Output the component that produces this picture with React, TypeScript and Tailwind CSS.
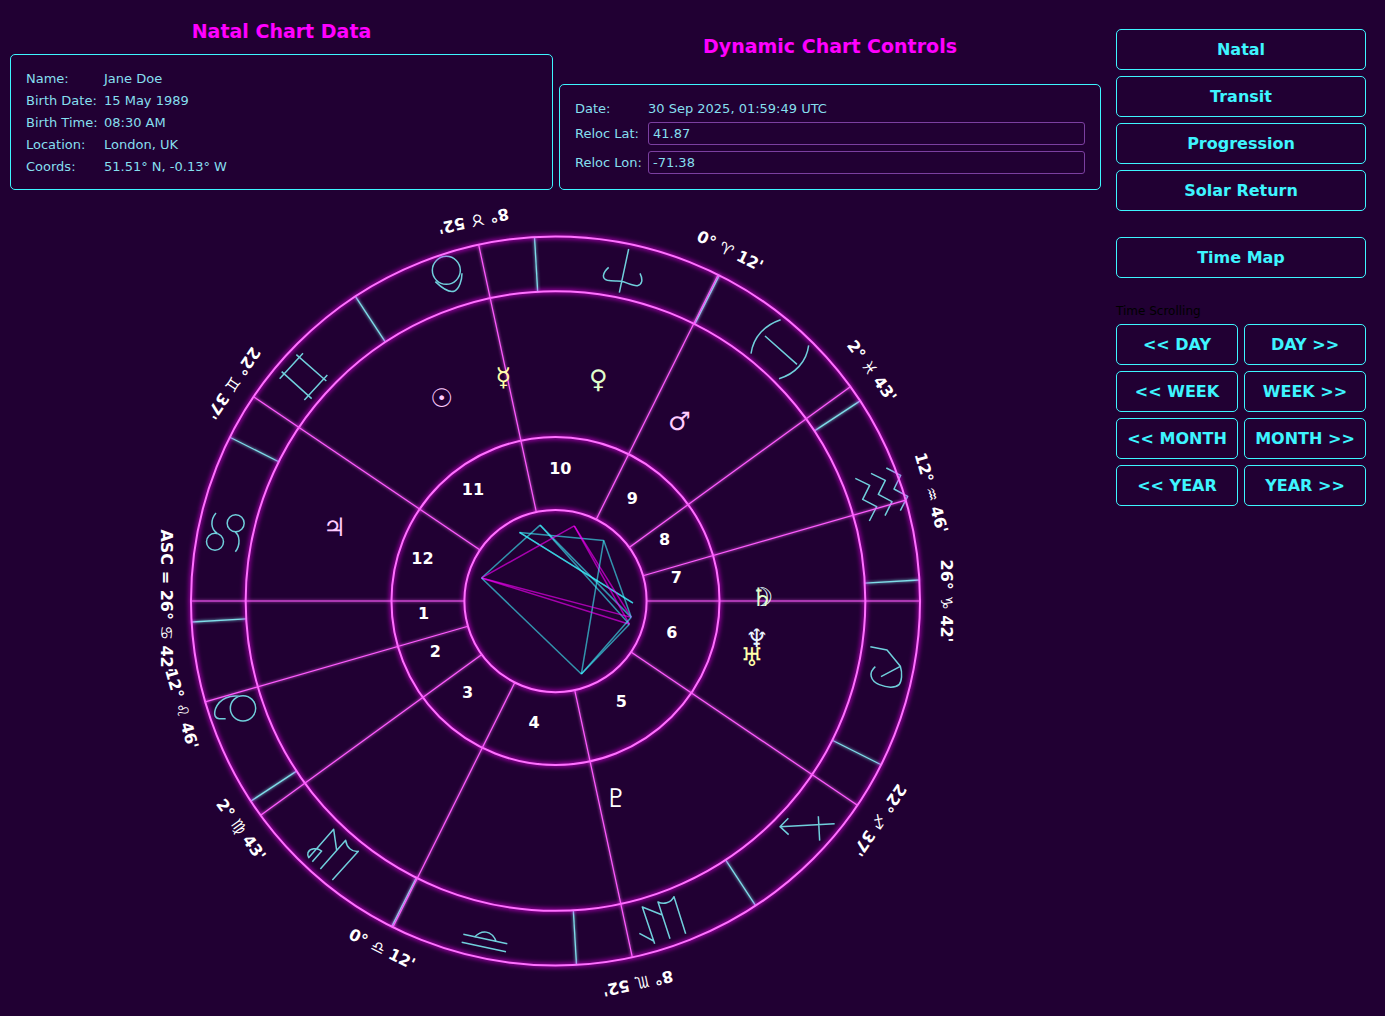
import React from "react";

const CX = 555.5;
const CY = 601;
const R = 364.5;

const point = (d: number, r: number) => {
  const a = (d * Math.PI) / 180;
  return { x: CX - r * Math.cos(a), y: CY + r * Math.sin(a) };
};

// Angles are degrees counterclockwise from the ascendant.
const cusps = [
  { d: 0, label: "ASC = 26° ♋︎ 42'" },
  { d: 16.07, label: "12° ♌︎ 46'" },
  { d: 36.02, label: "2° ♍︎ 43'" },
  { d: 63.5, label: "0° ♎︎ 12'" },
  { d: 102.17, label: "8° ♏︎ 52'" },
  { d: 145.92, label: "22° ♐︎ 37'" },
  { d: 180, label: "26° ♑︎ 42'" },
  { d: 196.07, label: "12° ♒︎ 46'" },
  { d: 216.02, label: "2° ♓︎ 43'" },
  { d: 243.5, label: "0° ♈︎ 12'" },
  { d: 282.17, label: "8° ♉︎ 52'" },
  { d: 325.92, label: "22° ♊︎ 37'" },
];

const planets: Record<string, { d: number; glyph: string; color: string }> = {
  sun: { d: -62.3, glyph: "☉", color: "#ffccff" },
  moon: { d: 178.5, glyph: "☽", color: "#e0ffff" },
  mercury: { d: -78.5, glyph: "☿", color: "#ffffaa" },
  venus: { d: -104, glyph: "♀", color: "#e0ffcc" },
  mars: { d: -128.5, glyph: "♂", color: "#ffccff" },
  jupiter: { d: -17.3, glyph: "♃", color: "#ffccff" },
  saturn: { d: 178.6, glyph: "♄", color: "#e0ffcc" },
  uranus: { d: 162.6, glyph: "♅", color: "#ffffaa" },
  neptune: { d: 167.8, glyph: "♆", color: "#e8f4ff" },
  pluto: { d: 109.5, glyph: "♇", color: "#ffffff" },
};

const aspects: [string, string, string][] = [
  ["sun", "moon", "#3ef5ff"],
  ["sun", "saturn", "#3ef5ff"],
  ["sun", "mars", "#3ef5ff"],
  ["mercury", "jupiter", "#3ef5ff"],
  ["mercury", "uranus", "#3ef5ff"],
  ["mercury", "neptune", "#3ef5ff"],
  ["venus", "jupiter", "#ff00ff"],
  ["venus", "uranus", "#ff00ff"],
  ["venus", "neptune", "#ff00ff"],
  ["mars", "neptune", "#3ef5ff"],
  ["mars", "pluto", "#3ef5ff"],
  ["jupiter", "uranus", "#ff00ff"],
  ["jupiter", "neptune", "#ff00ff"],
  ["jupiter", "pluto", "#3ef5ff"],
  ["uranus", "pluto", "#3ef5ff"],
  ["neptune", "pluto", "#3ef5ff"],
];

// Zodiac drawings, each in a local space three times finer than the chart's.
const signs = [
  { at: [430, 200], d: "M596 147 L568 278 M536 202 C518 218 514 236 532 241 C548 245 562 242 574 244 C586 246 608 258 622 257 C636 254 640 240 630 220" },
  { at: [180, 200], d: "M757 211 a42 42 0 1 0 84 0 a42 42 0 1 0 -84 0 M766 245 C790 268 812 278 824 273 C838 266 846 240 846 220" },
  { at: [180, 200], d: "M369 460 L299 536 M442 525 L373 600 M349 464 L439 543 M305 515 L395 596" },
  { at: [140, 480], d: "M261.500 130 a25.500 25.500 0 1 0 51 0 a25.500 25.500 0 1 0 -51 0 M199.500 185 a25.500 25.500 0 1 0 51 0 a25.500 25.500 0 1 0 -51 0 M228 99 C210 120 212 148 232 160 M284 155 C300 165 302 195 286 215" },
  { at: [140, 480], d: "M271 685 a38 38 0 1 0 76 0 a38 38 0 1 0 -76 0 M300 649 C270 644 240 655 227 685 C220 705 226 717 240 716 L257 716" },
  { at: [190, 760], d: "M367 305 L395 273 C380 262 360 265 354 278 C352 285 354 290 356 293 L431 208 L440 271 M391 327 L467 241 C470 262 485 276 505 274 L427 360" },
  { at: [430, 760], d: "M100 523 L232 551 M95 547 L228 575 M133 532 C155 508 185 510 199 545" },
  { at: [430, 760], d: "M628 520 L671 543 M674 551 L637 441 L697 465 M720 536 L684 426 C700 434 722 430 732 410 L767 521" },
  { at: [720, 540], d: "M344 851 L180 860 M205 835 L180 860 L206 884 M295 829 L299 902" },
  { at: [720, 540], d: "M451 320 L501 330 L541 379 L483 410 M541 379 C548 400 545 425 537 434 C525 445 500 443 478 434 C450 422 445 398 466 380" },
  { at: [690, 220], d: "M496 775 L539 796 L518 838 L560 860 L538 903 M543 760 L586 781 L565 823 L606 845 L585 887 M589 744 L632 766 L612 807 L653 829 L631 872" },
  { at: [690, 220], d: "M272 299 C225 315 190 350 183 401 M356 376 C350 425 315 462 267 476 M225 348 L321 433" },
];

const rings = [1, 0.85, 0.45, 0.25];

function Wheel() {
  return (
    <svg viewBox="0 190 1100 826" className="block h-[826px] w-[1100px]">
      <defs>
        <filter id="halo" filterUnits="userSpaceOnUse" x="0" y="190" width="1100" height="826">
          <feGaussianBlur stdDeviation="2.5" />
        </filter>
        <filter id="soft" filterUnits="userSpaceOnUse" x="0" y="190" width="1100" height="826">
          <feGaussianBlur stdDeviation="1.5" result="b" />
          <feMerge>
            <feMergeNode in="b" />
            <feMergeNode in="SourceGraphic" />
          </feMerge>
        </filter>
      </defs>
      <g stroke="#7fdde9" strokeWidth="1.300" filter="url(#soft)">
        {Array.from({ length: 12 }, (_, i) => {
          const a = point(3.3 + i * 30, R);
          const b = point(3.3 + i * 30, R * 0.85);
          return <line key={i} x1={a.x} y1={a.y} x2={b.x} y2={b.y} />;
        })}
      </g>
      <g fill="none" stroke="#70cfdc" strokeWidth="4.500" strokeLinejoin="round">
        {signs.map((s, i) => (
          <path key={i} transform={`translate(${s.at[0]} ${s.at[1]}) scale(0.33333)`} d={s.d} />
        ))}
      </g>
      <g fill="none" stroke="#ff00ff" strokeWidth="2.500" filter="url(#halo)">
        {rings.map((k) => (
          <circle key={k} cx={CX} cy={CY} r={R * k} />
        ))}
      </g>
      <g fill="none" stroke="#ff70ff" strokeWidth="2">
        {rings.map((k) => (
          <circle key={k} cx={CX} cy={CY} r={R * k} />
        ))}
      </g>
      <g stroke="#ff5cff" strokeWidth="1.200" filter="url(#soft)">
        {cusps.map((c) => {
          const a = point(c.d, R);
          const b = point(c.d, R * 0.25);
          return <line key={c.d} x1={a.x} y1={a.y} x2={b.x} y2={b.y} />;
        })}
      </g>
      <g strokeWidth="1.500" strokeOpacity="0.6">
        {aspects.map(([p, q, color]) => {
          const a = point(planets[p].d, R * 0.2125);
          const b = point(planets[q].d, R * 0.2125);
          return <line key={p + q} x1={a.x} y1={a.y} x2={b.x} y2={b.y} stroke={color} />;
        })}
      </g>
      <g fill="#ffffff" fontSize="16" fontWeight="700" textAnchor="middle">
        {cusps.map((c) => {
          const p = point(c.d, R + 25.5);
          const rot = (((90 - c.d) % 180) + 180) % 180;
          return (
            <text key={c.d} transform={`translate(${p.x} ${p.y}) rotate(${rot})`} y="4.400">
              {c.label}
            </text>
          );
        })}
      </g>
      <g fill="#ffffff" fontSize="16" fontWeight="700" textAnchor="end">
        {cusps.map((c, i) => {
          const next = i === 11 ? 360 : cusps[i + 1].d;
          const p = point((c.d + next) / 2, R * 0.35);
          return (
            <text key={i} x={p.x} y={p.y}>
              {i + 1}
            </text>
          );
        })}
      </g>
      <g fontSize="25.500" textAnchor="end">
        {Object.entries(planets).map(([name, b]) => {
          const p = point(b.d, R * 0.6);
          return (
            <text key={name} x={p.x - 0.8} y={p.y - 0.3} fill={b.color}>
              {b.glyph}
            </text>
          );
        })}
      </g>
    </svg>
  );
}

function ChartButton({ children }: { children: React.ReactNode }) {
  return (
    <button className="flex h-[41px] w-full items-center justify-center whitespace-nowrap rounded-[5px] border border-[#3ef5ff] text-base font-bold text-[#3ef5ff]">
      {children}
    </button>
  );
}

const natal = [
  ["Name:", "Jane Doe"],
  ["Birth Date:", "15 May 1989"],
  ["Birth Time:", "08:30 AM"],
  ["Location:", "London, UK"],
  ["Coords:", "51.51° N, -0.13° W"],
];

const relocation = [
  ["Reloc Lat:", "41.87"],
  ["Reloc Lon:", "-71.38"],
];

export default function App() {
  return (
    <div className="flex h-[1016px] w-[1385px] overflow-hidden bg-[#210033] font-['DejaVu_Sans',sans-serif]">
      <div className="w-[1101px] shrink-0">
        <div className="flex h-[190px] gap-[6px] pl-[10px] text-[13px] text-[#86dfee]">
          <section className="flex w-[543px] flex-col">
            <h3 className="flex h-[54px] items-center justify-center pt-[9px] text-[19px] font-bold text-[#ff00ff]">Natal Chart Data</h3>
            <div className="h-[136px] rounded-[5px] border border-[#3ef5ff] px-[15px] pt-[13px]">
              {natal.map(([k, v]) => (
                <div key={k} className="flex h-[22px] items-center">
                  <span className="w-[78px]">{k}</span>
                  <span>{v}</span>
                </div>
              ))}
            </div>
          </section>
          <section className="flex w-[542px] flex-col">
            <h3 className="flex h-[84px] items-center justify-center pt-[9px] text-[19px] font-bold text-[#ff00ff]">Dynamic Chart Controls</h3>
            <div className="h-[106px] rounded-[5px] border border-[#3ef5ff] px-[15px] pt-[13px]">
              <div className="flex h-[22px] items-center">
                <span className="w-[73px]">Date:</span>
                <span>30 Sep 2025, 01:59:49 UTC</span>
              </div>
              <div className="mt-[2px] flex flex-col gap-[6px]">
                {relocation.map(([k, v]) => (
                  <label key={k} className="flex h-[23px] items-center">
                    <span className="w-[73px] shrink-0">{k}</span>
                    <input defaultValue={v} className="h-[23px] min-w-0 flex-1 rounded-[3px] border border-[#7b3fa0] bg-transparent px-1" />
                  </label>
                ))}
              </div>
            </div>
          </section>
        </div>
        <Wheel />
      </div>
      <aside className="ml-[15px] flex w-[250px] flex-col gap-[6px] pt-[29px]">
        <ChartButton>Natal</ChartButton>
        <ChartButton>Transit</ChartButton>
        <ChartButton>Progression</ChartButton>
        <ChartButton>Solar Return</ChartButton>
        <div className="mt-5">
          <ChartButton>Time Map</ChartButton>
        </div>
        <div className="mt-[18px] h-4 text-[12px] leading-[18px] text-black">Time Scrolling</div>
        <div className="grid grid-cols-2 gap-[6px]">
          {["DAY", "WEEK", "MONTH", "YEAR"].map((unit) => (
            <React.Fragment key={unit}>
              <ChartButton>{"<< " + unit}</ChartButton>
              <ChartButton>{unit + " >>"}</ChartButton>
            </React.Fragment>
          ))}
        </div>
      </aside>
    </div>
  );
}
